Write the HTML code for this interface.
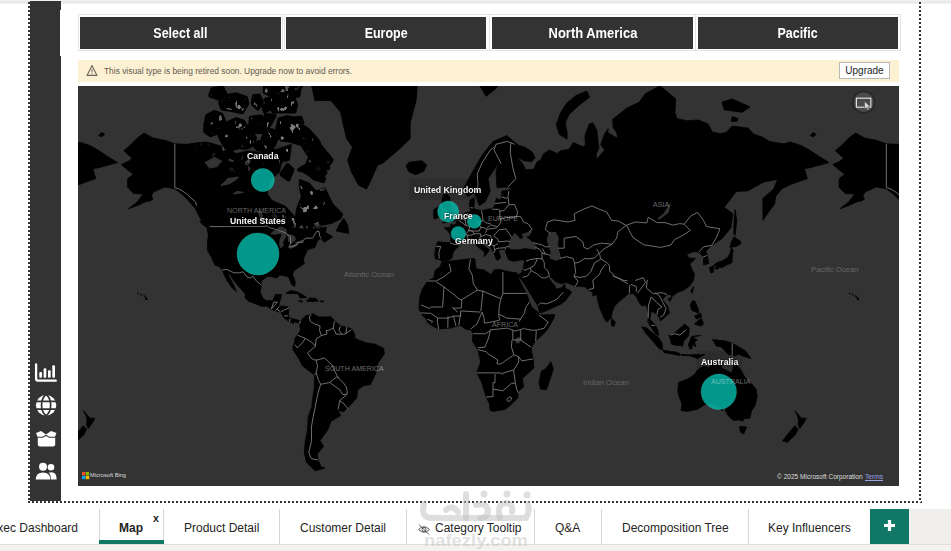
<!DOCTYPE html>
<html><head><meta charset="utf-8">
<style>
*{margin:0;padding:0;box-sizing:border-box}
html,body{width:951px;height:551px;overflow:hidden;background:#fff;font-family:"Liberation Sans",sans-serif;position:relative}
.abs{position:absolute}
#topband{left:0;top:0;width:951px;height:4px;background:linear-gradient(#f4f4f4,#e8e8e8 40%,#f2f2f2)}
#side{left:30px;top:1px;width:31px;height:500px;background:#333}
#dotl{left:28px;top:2px;width:2px;height:500px;background:repeating-linear-gradient(#333 0 2px,#fff 2px 4px)}
#dotb{left:28px;top:501px;width:894px;height:2px;background:repeating-linear-gradient(90deg,#333 0 2px,#fff 2px 4px)}
#dotr{left:919px;top:2px;width:2px;height:500px;background:repeating-linear-gradient(#333 0 2px,#fff 2px 4px)}
.btnwrap{top:14px;height:37px;border:1px solid #e3e3e3;background:#fff}
.btn{top:17px;height:32px;background:#333;color:#fff;font-weight:bold;font-size:14px;text-align:center;line-height:33px}
.btn span{display:inline-block;transform:scaleX(0.89)}
#warn{left:78px;top:60px;width:821px;height:22px;background:#fdf1d4}
#warn .t{left:26px;top:6px;font-size:8.4px;color:#5f5a50;white-space:nowrap}
#upg{left:839px;top:62px;width:51px;height:17px;background:#fff;border:1px solid #b8b8b8;font-size:10px;color:#222;text-align:center;line-height:15px}
#map{left:78px;top:86px;width:821px;height:400px;overflow:hidden;background:#333}
.lbl{position:absolute;color:#f4f4f4;font-size:9.7px;transform:scaleX(0.9);transform-origin:0 0;font-weight:bold;white-space:nowrap;text-shadow:0 0 2px rgba(0,0,0,.8);background:rgba(0,0,0,.13);box-shadow:0 0 0 5px rgba(0,0,0,.13)}
.glbl{position:absolute;color:#666;font-size:7.7px;white-space:nowrap}
#tabs{left:0;top:509px;width:951px;height:35px;background:#fff}
#tabband{left:0;top:544px;width:951px;height:7px;background:#f3f2f1;border-top:1px solid #e1dfdd}
.tab{position:absolute;top:510px;height:35px;font-size:12px;color:#252423;line-height:37px;white-space:nowrap}
.sep{position:absolute;top:509px;width:1px;height:35px;background:#d6d6d6}
</style></head><body>
<div class="abs" id="topband"></div>
<div class="abs" id="side"></div><div class="abs" style="left:60px;top:10px;width:1px;height:46px;background:#fff"></div>
<div class="abs" id="dotl"></div>
<div class="abs" id="dotb"></div>
<div class="abs" id="dotr"></div>
<svg class="abs" style="left:30px;top:355px" width="31" height="130" viewBox="30 355 31 130">
 <g fill="#fff">
  <path d="M36.1,364.5V378.5Q36.1,380.7 38.3,380.7H55.8" fill="none" stroke="#fff" stroke-width="2.3" stroke-linecap="round"/>
  <rect x="39.3" y="372" width="2.7" height="5.8" rx="1"/>
  <rect x="43.6" y="368.2" width="2.7" height="9.6" rx="1"/>
  <rect x="48" y="370.3" width="2.7" height="7.5" rx="1"/>
  <rect x="52.3" y="365.3" width="2.7" height="12.5" rx="1"/>
 </g>
 <g>
  <circle cx="46.1" cy="405.2" r="10.2" fill="#fff"/>
  <path d="M35,401.3H57.2M35,409.1H57.2" stroke="#333" stroke-width="1.7"/>
  <path d="M46.1,394.5 C40,399 40,411 46.1,415.9 M46.1,394.5 C52.2,399 52.2,411 46.1,415.9" stroke="#333" stroke-width="1.7" fill="none"/>
 </g>
 <g fill="#fff">
  <path d="M36,433 L41,431 L46,434.5 L51,431 L56.5,433 L55,436.8 L49.5,436.8 L46,434.8 L42.5,436.8 L37.5,436.8Z"/>
  <path d="M37.8,437.8 L42.8,437.8 L46,436 L49.2,437.8 L55.2,437.8 L55.2,444.5 Q55.2,446.6 53,446.6 L40,446.6 Q37.8,446.6 37.8,444.5Z"/>
 </g>
 <g fill="#fff">
  <circle cx="43" cy="466.8" r="4"/>
  <circle cx="51" cy="467.3" r="3.3"/>
  <path d="M35.8,479.6 Q35.8,472.4 43,472.4 Q50.2,472.4 50.2,479.6Z"/>
  <path d="M50.8,479.6 Q51,474.5 48.6,472.8 Q50,472.3 51.5,472.3 Q56.7,472.3 56.7,479.6Z"/>
 </g>
</svg>

<div class="abs btnwrap" style="left:78px;width:205px"></div>
<div class="abs btnwrap" style="left:284px;width:206px"></div>
<div class="abs btnwrap" style="left:489px;width:207px"></div>
<div class="abs btnwrap" style="left:695px;width:206px"></div>
<div class="abs btn" style="left:80px;width:201px"><span>Select all</span></div>
<div class="abs btn" style="left:286px;width:200px"><span>Europe</span></div>
<div class="abs btn" style="left:492px;width:201px"><span style="transform:scaleX(0.925)">North America</span></div>
<div class="abs btn" style="left:698px;width:200px"><span>Pacific</span></div>

<div class="abs" id="warn"><div class="abs t">This visual type is being retired soon. Upgrade now to avoid errors.</div>
<svg class="abs" style="left:8px;top:4px" width="12" height="13" viewBox="0 0 12 13"><path d="M6,1.6 L11,11.4 L1,11.4Z" fill="none" stroke="#6a655c" stroke-width="1.1" stroke-linejoin="round"/><path d="M6,5V8.4M6,9.4V10.3" stroke="#6a655c" stroke-width="1"/></svg>
</div>
<div class="abs" id="upg">Upgrade</div>

<div class="abs" id="map"><svg width="821" height="400" viewBox="0 0 821 400" style="display:block"><rect width="821" height="400" fill="#333"/><path d="M74.1,110.9L74.7,113.5L70.1,115.7L69.6,112.4L74.1,110.9ZM785.6,110.9L786.2,113.5L781.6,115.7L781.1,112.4L785.6,110.9ZM121.9,135.1L127.5,136.3L131.6,142.4L128.8,141.8L123.5,137.6L121.9,135.1ZM43.3,78.6L50.4,75.2L54.1,72.2L45.8,64.7L53.3,58.3L59.3,52.0L66.2,47.1L75.1,52.0L86.9,54.3L96.8,57.8L108.7,58.3L120.5,56.6L129.4,56.1L148.2,61.7L158.1,67.6L170.0,64.9L181.8,66.5L187.7,55.5L197.6,63.9L213.4,58.3L211.5,74.2L203.6,76.6L201.6,86.0L191.7,94.7L189.3,107.5L193.7,114.2L207.5,120.3L217.4,131.3L218.4,123.0L223.3,110.5L221.3,100.9L221.3,93.4L231.2,96.8L238.1,104.8L247.0,101.7L254.9,117.8L264.8,128.0L262.8,132.9L254.0,137.2L243.1,139.7L239.1,142.1L248.6,141.2L247.4,146.5L254.9,150.8L246.0,156.3L243.1,152.2L239.1,155.0L237.2,161.2L229.2,164.1L227.5,168.4L225.3,173.2L226.3,177.6L215.4,185.2L214.6,188.7L217.4,196.5L216.4,200.5L213.8,198.8L210.5,190.9L206.5,189.8L201.6,189.1L199.2,192.1L193.7,190.7L189.7,190.5L183.2,194.8L183.4,199.0L182.2,206.3L185.2,212.7L188.7,214.8L194.7,214.6L197.6,208.5L203.6,208.5L202.0,214.8L200.6,220.0L208.5,220.4L211.1,222.0L210.3,228.1L211.5,232.1L218.4,233.5L222.3,235.1L220.7,237.1L216.4,235.7L215.4,237.5L210.5,235.1L206.1,232.1L204.5,229.1L202.4,226.1L197.6,225.1L192.7,222.8L188.7,220.0L183.8,220.4L177.9,217.9L170.9,215.4L167.0,211.6L167.6,208.5L165.0,205.3L159.5,199.2L155.7,194.3L152.6,189.8L148.6,186.1L153.2,194.3L157.1,202.0L158.3,205.5L153.7,201.4L149.2,194.8L146.2,188.7L144.1,184.0L141.3,180.5L137.1,179.3L133.4,171.2L129.6,164.6L129.4,157.7L130.4,148.5L129.0,142.4L132.4,140.6L123.5,135.1L117.6,123.0L111.7,116.0L104.7,108.7L96.8,102.9L86.9,100.9L75.5,106.0L71.1,114.2L59.3,119.6L50.4,122.7L59.3,116.0L65.2,107.9L55.7,107.5L49.4,100.9L49.8,92.6L55.3,88.2L49.4,83.7L43.3,78.6ZM754.8,78.6L761.9,75.2L765.6,72.2L757.3,64.7L764.8,58.3L770.8,52.0L777.7,47.1L786.6,52.0L798.4,54.3L808.3,57.8L820.2,58.3L832.0,56.6L840.9,56.1L859.7,61.7L869.6,67.6L881.5,64.9L893.3,66.5L899.2,55.5L909.1,63.9L924.9,58.3L923.0,74.2L915.1,76.6L913.1,86.0L903.2,94.7L900.8,107.5L905.2,114.2L919.0,120.3L928.9,131.3L929.9,123.0L934.8,110.5L932.8,100.9L932.8,93.4L942.7,96.8L949.6,104.8L958.5,101.7L966.4,117.8L976.3,128.0L974.3,132.9L965.5,137.2L954.6,139.7L950.6,142.1L960.1,141.2L958.9,146.5L966.4,150.8L957.5,156.3L954.6,152.2L950.6,155.0L948.7,161.2L940.7,164.1L939.0,168.4L936.8,173.2L937.8,177.6L926.9,185.2L926.1,188.7L928.9,196.5L927.9,200.5L925.3,198.8L922.0,190.9L918.0,189.8L913.1,189.1L910.7,192.1L905.2,190.7L901.2,190.5L894.7,194.8L894.9,199.0L893.7,206.3L896.7,212.7L900.2,214.8L906.2,214.6L909.1,208.5L915.1,208.5L913.5,214.8L912.1,220.0L920.0,220.4L922.6,222.0L921.8,228.1L923.0,232.1L929.9,233.5L933.8,235.1L932.2,237.1L927.9,235.7L926.9,237.5L922.0,235.1L917.6,232.1L916.0,229.1L913.9,226.1L909.1,225.1L904.2,222.8L900.2,220.0L895.3,220.4L889.4,217.9L882.4,215.4L878.5,211.6L879.1,208.5L876.5,205.3L871.0,199.2L867.2,194.3L864.1,189.8L860.1,186.1L864.7,194.3L868.6,202.0L869.8,205.5L865.2,201.4L860.7,194.8L857.7,188.7L855.6,184.0L852.8,180.5L848.6,179.3L844.9,171.2L841.1,164.6L840.9,157.7L841.9,148.5L840.5,142.4L843.9,140.6L835.0,135.1L829.1,123.0L823.2,116.0L816.2,108.7L808.3,102.9L798.4,100.9L787.0,106.0L782.6,114.2L770.8,119.6L761.9,122.7L770.8,116.0L776.7,107.9L767.2,107.5L760.9,100.9L761.3,92.6L766.8,88.2L760.9,83.7L754.8,78.6ZM237.2,14.5L233.2,-3.1L243.1,-23.9L256.9,-49.2L296.4,-72.8L336.0,-49.2L339.9,-13.0L337.9,14.5L332.0,36.8L332.0,52.6L320.2,63.9L305.3,76.6L299.4,79.1L292.5,94.7L288.5,102.9L280.6,98.9L273.7,86.0L269.8,74.2L274.7,61.1L268.8,52.6L265.8,40.1L262.8,26.2L253.0,14.5L237.2,14.5ZM343.9,74.7L331.0,76.2L328.1,80.0L331.0,86.0L337.9,88.7L345.9,85.1L348.6,79.1L343.9,74.7ZM265.8,132.5L269.8,139.1L270.8,147.4L258.3,145.0L260.9,139.1L265.8,132.5ZM212.4,204.8L217.4,205.3L224.3,208.5L228.9,211.6L222.1,211.9L220.4,207.8L215.4,207.4L207.7,207.6L212.4,204.8ZM231.6,212.1L237.4,212.3L240.5,215.0L235.2,215.6L228.5,215.2L231.6,212.1ZM220.7,214.8L224.7,215.0L223.7,216.0L220.7,215.4L220.7,214.8ZM242.7,214.8L245.8,215.0L245.3,215.8L242.7,215.8L242.7,214.8ZM222.5,234.9L227.3,230.1L232.8,228.5L234.0,230.9L234.0,227.3L241.1,231.1L253.0,230.7L256.9,235.1L262.8,240.1L268.8,241.1L273.7,243.1L276.7,248.0L276.7,252.0L280.6,254.0L288.5,256.9L296.4,257.9L305.7,262.3L306.3,267.9L299.4,277.9L297.4,288.2L292.5,298.5L285.6,299.8L279.6,304.1L278.7,311.9L272.7,318.8L265.8,325.4L259.9,324.7L262.8,329.6L253.0,335.3L251.0,341.0L249.0,345.0L242.1,354.6L245.5,360.4L239.1,368.0L240.1,374.0L243.1,381.0L247.0,382.0L237.2,384.8L228.3,376.0L226.3,366.4L227.3,354.6L229.2,346.3L229.6,342.3L230.2,330.8L233.8,321.2L234.4,314.2L236.2,303.1L236.6,289.2L224.7,279.9L220.4,271.9L215.0,263.9L214.8,260.9L216.4,256.9L217.0,252.0L219.6,249.0L222.5,244.1L221.7,238.1L222.5,234.9ZM363.8,176.1L395.3,172.4L397.2,173.2L397.2,178.1L398.2,182.8L406.1,184.0L413.1,188.7L416.0,184.0L421.0,183.3L433.8,186.3L439.3,187.0L439.7,189.8L442.5,196.5L448.4,207.4L451.6,215.8L453.6,221.0L460.9,227.1L460.9,229.1L476.7,228.5L475.9,232.1L470.4,242.1L465.4,248.0L457.5,255.0L453.6,260.9L453.6,265.9L455.3,272.9L455.9,282.0L444.3,292.4L445.7,300.9L440.3,305.2L439.7,311.9L432.8,318.8L426.9,323.5L415.0,325.4L412.1,324.2L411.5,317.7L408.1,311.0L403.8,296.6L398.8,286.7L402.6,275.9L401.2,268.9L399.8,263.9L394.3,255.0L394.9,248.0L393.3,244.1L388.3,243.5L382.2,239.3L372.5,242.1L360.7,242.9L354.7,240.1L349.4,236.5L348.4,233.1L344.3,229.5L340.9,222.6L341.9,210.6L344.3,203.1L349.8,194.8L355.7,192.1L357.1,184.5L362.1,180.7L363.8,176.1ZM472.9,275.9L475.3,283.0L472.3,292.4L468.4,303.7L462.5,303.1L461.1,296.6L463.4,285.1L467.4,283.0L472.9,275.9ZM-347.1,175.6L-340.0,173.9L-337.4,171.7L-336.6,166.9L-334.0,163.0L-329.7,159.6L-329.1,157.1L-324.1,156.9L-319.2,154.4L-316.2,155.0L-311.3,161.2L-305.2,165.6L-305.2,170.7L-303.2,168.4L-300.8,165.1L-302.4,164.3L-299.4,164.1L-304.4,160.6L-309.3,156.3L-311.7,151.1L-308.9,150.2L-306.7,153.6L-300.0,158.8L-297.7,163.0L-295.1,168.2L-293.3,173.2L-291.5,174.4L-288.6,171.2L-290.5,166.9L-290.9,164.3L-287.6,163.3L-283.6,163.5L-284.0,165.6L-282.2,170.7L-280.7,173.9L-275.7,175.2L-266.8,173.7L-265.0,175.6L-266.4,182.8L-267.8,186.3L-271.6,189.6L-267.6,194.3L-261.9,203.1L-256.9,211.6L-251.4,220.0L-250.0,226.7L-246.1,226.1L-237.2,222.0L-228.3,217.9L-224.1,214.8L-217.8,206.3L-220.4,204.0L-224.3,202.2L-224.7,198.1L-228.3,202.0L-233.2,203.1L-234.8,199.6L-237.2,197.0L-241.1,191.4L-240.1,189.8L-234.2,195.4L-228.3,197.7L-223.3,196.5L-214.5,199.9L-204.0,200.9L-201.2,204.2L-196.7,206.3L-196.7,210.0L-192.5,208.5L-192.1,213.7L-189.7,222.0L-185.4,232.1L-182.8,235.9L-178.3,232.1L-177.3,226.1L-174.9,220.0L-171.4,216.4L-164.3,210.6L-161.1,207.8L-156.1,207.4L-153.4,210.6L-149.4,217.9L-147.3,220.0L-143.3,218.9L-140.9,228.1L-141.7,236.1L-137.8,242.1L-134.8,247.1L-130.9,249.4L-131.6,244.1L-134.4,239.1L-139.7,233.1L-138.4,225.3L-134.4,227.1L-130.5,231.1L-128.9,234.9L-124.5,231.1L-120.0,227.1L-122.0,220.0L-127.1,213.7L-122.5,208.5L-118.6,208.5L-118.2,211.0L-111.7,206.3L-105.8,204.2L-99.8,199.9L-95.9,194.3L-95.1,187.7L-97.3,184.0L-99.8,178.1L-93.9,172.4L-100.8,171.9L-102.8,168.2L-95.9,165.6L-90.5,166.1L-86.0,171.4L-86.0,179.0L-80.7,177.6L-82.2,169.4L-83.6,165.6L-77.9,159.0L-75.1,157.7L-67.2,152.2L-58.7,142.1L-56.7,128.0L-58.3,126.4L-65.2,121.3L-53.4,105.6L-41.5,104.8L-25.7,96.0L-11.9,93.4L-15.8,102.9L-26.7,112.4L-26.5,134.4L-22.3,128.0L-14.8,117.8L-13.8,110.5L-7.9,102.9L-0.0,98.9L17.8,92.6L14.8,82.8L21.7,81.4L39.5,76.6L31.6,71.7L19.8,63.9L11.8,59.5L1.0,56.1L-5.9,57.8L-19.8,55.5L-27.7,50.8L-35.6,48.3L-41.5,42.0L-57.3,40.1L-63.3,46.5L-69.2,47.7L-77.1,45.9L-81.4,38.1L-90.9,34.0L-102.8,34.7L-112.7,32.6L-114.6,26.2L-113.7,12.9L-129.5,-0.3L-144.3,7.8L-150.2,16.1L-163.1,22.4L-176.9,33.3L-176.3,42.0L-172.9,46.5L-171.6,52.6L-181.8,46.5L-181.2,42.7L-184.8,47.7L-188.8,58.3L-184.8,63.9L-193.1,73.7L-193.1,67.6L-190.7,62.2L-191.7,53.7L-192.5,44.6L-196.7,36.8L-200.2,38.1L-204.6,49.6L-204.0,58.3L-205.6,61.1L-216.4,56.6L-220.4,63.3L-229.3,64.9L-232.2,67.6L-240.1,63.9L-246.1,68.1L-249.0,74.2L-252.4,75.7L-255.8,83.3L-263.9,83.7L-266.8,77.6L-270.8,73.2L-272.0,71.2L-265.8,74.7L-257.9,75.7L-254.4,71.7L-257.3,66.0L-264.9,61.1L-270.8,59.5L-282.6,49.6L-296.5,55.5L-307.3,69.1L-318.2,88.2L-326.1,102.9L-322.2,110.5L-315.2,106.8L-312.7,112.4L-310.3,119.6L-304.4,116.0L-299.4,105.6L-301.4,92.6L-291.5,78.1L-293.5,86.0L-292.5,101.7L-281.6,100.9L-276.7,103.3L-287.6,105.2L-288.6,114.2L-293.3,112.4L-294.5,118.9L-297.3,123.3L-299.4,122.7L-307.9,124.7L-314.3,123.3L-315.8,122.0L-315.1,116.0L-315.2,111.7L-319.6,114.2L-320.0,119.6L-318.6,125.4L-324.1,126.7L-327.7,131.3L-331.1,133.8L-332.8,134.8L-333.2,137.6L-335.8,139.1L-338.8,138.5L-339.0,141.5L-345.3,141.8L-340.9,145.6L-338.4,150.8L-339.0,156.3L-343.5,156.6L-351.8,155.8L-353.6,160.4L-354.8,168.9L-353.8,173.2L-350.8,173.2L-347.1,175.6ZM364.4,175.6L371.5,173.9L374.1,171.7L374.9,166.9L377.5,163.0L381.8,159.6L382.4,157.1L387.4,156.9L392.3,154.4L395.3,155.0L400.2,161.2L406.3,165.6L406.3,170.7L408.3,168.4L410.7,165.1L409.1,164.3L412.1,164.1L407.1,160.6L402.2,156.3L399.8,151.1L402.6,150.2L404.8,153.6L411.5,158.8L413.8,163.0L416.4,168.2L418.2,173.2L420.0,174.4L422.9,171.2L421.0,166.9L420.6,164.3L423.9,163.3L427.9,163.5L427.5,165.6L429.3,170.7L430.8,173.9L435.8,175.2L444.7,173.7L446.5,175.6L445.1,182.8L443.7,186.3L439.9,189.6L443.9,194.3L449.6,203.1L454.6,211.6L460.1,220.0L461.5,226.7L465.4,226.1L474.3,222.0L483.2,217.9L487.4,214.8L493.7,206.3L491.1,204.0L487.2,202.2L486.8,198.1L483.2,202.0L478.3,203.1L476.7,199.6L474.3,197.0L470.4,191.4L471.4,189.8L477.3,195.4L483.2,197.7L488.2,196.5L497.0,199.9L507.5,200.9L510.3,204.2L514.8,206.3L514.8,210.0L519.0,208.5L519.4,213.7L521.8,222.0L526.1,232.1L528.7,235.9L533.2,232.1L534.2,226.1L536.6,220.0L540.1,216.4L547.2,210.6L550.4,207.8L555.4,207.4L558.1,210.6L562.1,217.9L564.2,220.0L568.2,218.9L570.6,228.1L569.8,236.1L573.7,242.1L576.7,247.1L580.6,249.4L579.9,244.1L577.1,239.1L571.8,233.1L573.1,225.3L577.1,227.1L581.0,231.1L582.6,234.9L587.0,231.1L591.5,227.1L589.5,220.0L584.4,213.7L589.0,208.5L592.9,208.5L593.3,211.0L599.8,206.3L605.7,204.2L611.7,199.9L615.6,194.3L616.4,187.7L614.2,184.0L611.7,178.1L617.6,172.4L610.7,171.9L608.7,168.2L615.6,165.6L621.0,166.1L625.5,171.4L625.5,179.0L630.8,177.6L629.3,169.4L627.9,165.6L633.6,159.0L636.4,157.7L644.3,152.2L652.8,142.1L654.8,128.0L653.2,126.4L646.3,121.3L658.1,105.6L670.0,104.8L685.8,96.0L699.6,93.4L695.7,102.9L684.8,112.4L685.0,134.4L689.2,128.0L696.7,117.8L697.7,110.5L703.6,102.9L711.5,98.9L729.3,92.6L726.3,82.8L733.2,81.4L751.0,76.6L743.1,71.7L731.2,63.9L723.3,59.5L712.5,56.1L705.6,57.8L691.7,55.5L683.8,50.8L675.9,48.3L670.0,42.0L654.2,40.1L648.2,46.5L642.3,47.7L634.4,45.9L630.1,38.1L620.6,34.0L608.7,34.7L598.8,32.6L596.9,26.2L597.8,12.9L582.0,-0.3L567.2,7.8L561.3,16.1L548.4,22.4L534.6,33.3L535.2,42.0L538.6,46.5L539.9,52.6L529.7,46.5L530.3,42.7L526.7,47.7L522.7,58.3L526.7,63.9L518.4,73.7L518.4,67.6L520.8,62.2L519.8,53.7L519.0,44.6L514.8,36.8L511.3,38.1L506.9,49.6L507.5,58.3L505.9,61.1L495.1,56.6L491.1,63.3L482.2,64.9L479.3,67.6L471.4,63.9L465.4,68.1L462.5,74.2L459.1,75.7L455.7,83.3L447.6,83.7L444.7,77.6L440.7,73.2L439.5,71.2L445.7,74.7L453.6,75.7L457.1,71.7L454.2,66.0L446.6,61.1L440.7,59.5L428.9,49.6L415.0,55.5L404.2,69.1L393.3,88.2L385.4,102.9L389.3,110.5L396.3,106.8L398.8,112.4L401.2,119.6L407.1,116.0L412.1,105.6L410.1,92.6L420.0,78.1L418.0,86.0L419.0,101.7L429.9,100.9L434.8,103.3L423.9,105.2L422.9,114.2L418.2,112.4L417.0,118.9L414.2,123.3L412.1,122.7L403.6,124.7L397.2,123.3L395.7,122.0L396.4,116.0L396.3,111.7L391.9,114.2L391.5,119.6L392.9,125.4L387.4,126.7L383.8,131.3L380.4,133.8L378.7,134.8L378.3,137.6L375.7,139.1L372.7,138.5L372.5,141.5L366.2,141.8L370.6,145.6L373.1,150.8L372.5,156.3L368.0,156.6L359.7,155.8L357.9,160.4L356.7,168.9L357.7,173.2L360.7,173.2L364.4,175.6ZM369.6,108.3L371.9,111.7L372.5,121.3L375.9,126.4L378.9,128.4L378.3,132.9L378.1,134.1L376.1,135.1L371.5,135.7L364.6,137.2L367.2,133.8L365.4,132.5L366.4,128.4L369.6,126.7L368.4,123.0L365.6,121.3L364.2,118.5L364.0,114.2L365.4,108.7L369.6,108.3ZM361.1,120.3L363.4,124.4L363.0,130.6L356.1,132.9L355.7,128.0L355.7,123.7L361.1,120.3ZM653.2,161.7L655.2,164.3L654.2,170.7L654.0,176.6L648.6,179.0L643.9,181.7L638.4,179.8L634.4,180.5L638.4,176.9L645.3,174.4L649.8,171.2L652.2,166.9L653.2,161.7ZM655.9,150.8L662.1,155.0L663.1,157.7L658.1,160.4L652.2,161.4L653.0,157.1L655.9,150.8ZM634.2,180.5L631.4,181.7L632.8,187.0L635.2,186.3L636.0,182.4L634.2,180.5ZM641.3,179.8L640.7,182.4L638.4,183.3L636.8,181.7L641.3,179.8ZM657.1,123.7L658.7,134.4L657.1,149.4L655.8,147.9L656.1,134.4L657.1,123.7ZM615.6,200.3L614.2,207.4L612.9,205.3L615.6,200.3ZM593.9,211.6L591.9,215.4L590.1,212.7L593.9,211.6ZM614.4,214.8L617.0,215.2L620.6,224.1L620.6,226.9L613.9,224.5L612.3,218.9L614.4,214.8ZM623.5,232.5L625.5,238.1L622.5,240.1L616.6,238.1L619.6,235.1L623.5,232.5ZM622.5,227.1L623.5,231.1L618.6,233.1L616.6,230.1L622.5,227.1ZM606.7,238.1L611.3,242.1L610.5,250.0L605.7,255.0L604.8,259.9L595.9,258.9L593.3,257.9L592.9,255.0L590.9,249.0L595.3,248.0L601.2,242.9L606.7,238.1ZM563.8,240.9L568.4,241.7L573.5,246.3L580.1,251.0L584.0,256.9L584.6,263.7L581.6,262.9L577.1,257.9L572.2,252.0L567.6,247.1L563.8,240.9ZM585.0,263.9L593.9,265.7L597.8,265.9L601.6,267.5L601.8,269.5L593.9,267.9L586.0,266.7L585.0,263.9ZM602.8,268.3L610.7,268.9L618.6,268.5L622.5,268.9L627.1,268.3L622.5,270.9L619.6,272.5L611.7,269.7L603.2,269.5L602.8,268.3ZM622.5,249.4L613.7,250.4L612.3,253.6L610.5,258.9L611.7,263.1L613.7,262.9L614.6,257.9L617.6,260.9L616.6,256.0L619.2,254.0L614.6,251.0L622.5,249.4ZM634.4,253.6L647.3,255.0L654.2,257.1L664.1,262.9L667.6,264.9L672.9,272.5L666.0,270.5L660.1,267.9L657.3,269.9L650.2,268.3L643.3,260.9L638.0,259.9L636.8,256.9L634.4,253.6ZM657.1,273.3L659.3,279.9L662.9,284.0L667.0,291.3L673.5,297.7L678.1,303.1L679.1,310.8L676.9,320.0L673.5,324.7L672.0,332.1L666.0,332.8L664.6,335.3L661.1,334.1L655.2,334.3L652.4,332.1L648.6,327.6L649.2,325.9L647.3,325.4L647.8,321.2L643.9,324.7L639.3,318.8L634.4,317.7L626.5,318.8L619.6,323.3L608.7,325.4L603.0,324.5L604.0,317.7L601.2,310.8L599.8,305.2L600.6,296.6L601.2,296.2L609.7,293.0L617.0,288.2L618.6,285.1L623.5,281.0L628.3,280.4L631.4,282.0L633.4,276.9L638.4,275.9L645.3,273.9L644.1,277.9L643.3,282.0L653.8,287.1L655.2,282.0L655.4,276.9L657.1,273.3ZM661.5,340.5L668.6,341.0L665.6,347.9L662.5,346.3L661.5,340.5ZM5.3,324.5L11.8,332.1L16.8,332.3L14.2,337.1L10.3,342.6L8.5,338.4L9.1,334.6L7.9,329.6L5.3,324.5ZM716.8,324.5L723.3,332.1L728.3,332.3L725.7,337.1L721.8,342.6L720.0,338.4L720.6,334.6L719.4,329.6L716.8,324.5ZM5.3,339.7L8.5,343.1L6.1,348.5L-2.0,356.3L-6.9,354.9L-2.0,348.5L5.3,339.7ZM716.8,339.7L720.0,343.1L717.6,348.5L709.5,356.3L704.6,354.9L709.5,348.5L716.8,339.7ZM534.0,232.5L537.2,236.1L536.2,240.1L533.6,239.7L533.2,236.1L534.0,232.5ZM489.1,53.1L481.2,48.3L478.3,38.8L482.2,27.6L488.2,17.7L498.0,9.5L508.9,5.1L511.5,11.2L501.0,19.3L491.1,28.4L487.2,36.8L489.1,46.5L489.1,53.1ZM408.1,10.3L401.2,-1.2L397.2,-13.0L409.1,-23.9L428.9,-18.3L422.9,-3.1L417.0,3.4L408.1,10.3ZM646.3,23.9L643.9,16.1L654.2,12.9L672.0,20.9L664.1,26.2L646.3,23.9ZM20.7,49.6L23.7,46.5L26.7,48.3L23.7,50.8L20.7,49.6ZM732.2,49.6L735.2,46.5L738.2,48.3L735.2,50.8L732.2,49.6ZM653.2,35.4L654.2,30.5L660.1,32.6L659.1,35.4L653.2,35.4ZM67.4,211.9L67.6,211.2L69.6,212.7L67.8,213.9L67.4,211.9ZM778.9,211.9L779.1,211.2L781.1,212.7L779.3,213.9L778.9,211.9ZM65.8,209.5L67.4,210.4L66.0,210.6L65.8,209.5ZM777.3,209.5L778.9,210.4L777.5,210.6L777.3,209.5ZM62.8,208.0L64.0,208.9L62.8,209.1L62.8,208.0ZM774.3,208.0L775.5,208.9L774.3,209.1L774.3,208.0ZM60.1,206.8L60.7,207.6L59.7,207.6L60.1,206.8ZM771.6,206.8L772.2,207.6L771.2,207.6L771.6,206.8Z" fill="#000" stroke="#000" stroke-width="0.8"/><path d="M141.3,12.9L132.4,9.5L134.4,3.4L144.3,1.6L147.2,7.8L141.3,12.9ZM186.8,25.4L185.4,20.1L189.7,18.5L191.7,22.4L186.8,25.4ZM195.6,59.5L198.6,52.6L194.7,44.6L188.7,43.3L184.8,52.6L186.8,58.3L195.6,59.5ZM216.4,38.1L215.4,32.6L222.3,31.9L224.3,36.8L216.4,38.1ZM193.7,-1.2L201.6,-8.0L193.7,-23.9L183.8,-18.3L185.8,-3.1L193.7,-1.2ZM201.6,33.3L209.5,31.2L221.3,34.0L221.7,38.8L229.2,43.3L235.2,49.6L240.1,55.5L242.1,60.0L246.0,64.9L251.0,70.7L253.4,74.2L250.0,79.1L250.0,82.3L245.1,79.1L246.6,85.1L247.4,86.9L244.1,89.1L246.0,92.6L245.1,95.1L236.2,92.2L233.2,89.6L226.3,85.1L221.3,83.7L229.2,79.1L232.2,70.7L228.3,64.9L224.3,58.3L211.5,54.3L203.6,53.7L198.6,45.9L201.6,33.3ZM142.9,52.6L140.9,47.7L143.3,41.4L149.2,37.4L158.1,33.3L165.0,35.4L168.0,40.1L173.9,46.5L176.9,52.0L174.9,58.3L168.0,61.7L161.1,61.1L153.2,63.3L146.2,58.3L142.9,52.6ZM132.4,49.0L127.3,45.2L127.5,38.1L129.4,29.8L136.4,26.2L143.1,28.4L146.2,35.4L140.7,40.1L139.3,46.5L132.4,49.0ZM198.0,12.0L209.5,11.2L220.4,9.5L221.7,1.6L229.2,-8.0L237.2,-23.9L187.7,-23.9L186.8,6.0L198.0,12.0ZM195.6,25.4L209.5,25.4L216.4,25.4L218.0,18.5L215.4,12.0L199.6,10.3L187.7,13.7L190.7,19.3L195.6,25.4ZM189.7,41.4L186.8,36.8L187.7,29.1L196.6,29.8L192.7,36.8L189.7,41.4ZM183.8,45.9L185.8,40.1L182.8,30.5L172.9,31.9L172.3,40.1L177.9,45.9L183.8,45.9ZM164.0,26.2L154.1,23.9L144.3,22.4L142.3,16.9L146.2,10.3L158.1,8.6L168.0,12.0L169.0,17.7L164.0,26.2ZM179.8,22.4L174.9,17.7L175.9,10.3L180.8,9.5L183.8,16.1L179.8,22.4ZM209.5,79.1L214.4,83.7L210.5,93.4L203.6,88.2L209.5,79.1ZM179.8,63.3L176.9,59.5L180.8,56.1L185.8,56.6L186.8,61.7L179.8,63.3Z" fill="#000" stroke="#000" stroke-width="4.2" stroke-linejoin="round"/><defs><clipPath id="landclip"><path d="M74.1,110.9L74.7,113.5L70.1,115.7L69.6,112.4L74.1,110.9ZM785.6,110.9L786.2,113.5L781.6,115.7L781.1,112.4L785.6,110.9ZM121.9,135.1L127.5,136.3L131.6,142.4L128.8,141.8L123.5,137.6L121.9,135.1ZM43.3,78.6L50.4,75.2L54.1,72.2L45.8,64.7L53.3,58.3L59.3,52.0L66.2,47.1L75.1,52.0L86.9,54.3L96.8,57.8L108.7,58.3L120.5,56.6L129.4,56.1L148.2,61.7L158.1,67.6L170.0,64.9L181.8,66.5L187.7,55.5L197.6,63.9L213.4,58.3L211.5,74.2L203.6,76.6L201.6,86.0L191.7,94.7L189.3,107.5L193.7,114.2L207.5,120.3L217.4,131.3L218.4,123.0L223.3,110.5L221.3,100.9L221.3,93.4L231.2,96.8L238.1,104.8L247.0,101.7L254.9,117.8L264.8,128.0L262.8,132.9L254.0,137.2L243.1,139.7L239.1,142.1L248.6,141.2L247.4,146.5L254.9,150.8L246.0,156.3L243.1,152.2L239.1,155.0L237.2,161.2L229.2,164.1L227.5,168.4L225.3,173.2L226.3,177.6L215.4,185.2L214.6,188.7L217.4,196.5L216.4,200.5L213.8,198.8L210.5,190.9L206.5,189.8L201.6,189.1L199.2,192.1L193.7,190.7L189.7,190.5L183.2,194.8L183.4,199.0L182.2,206.3L185.2,212.7L188.7,214.8L194.7,214.6L197.6,208.5L203.6,208.5L202.0,214.8L200.6,220.0L208.5,220.4L211.1,222.0L210.3,228.1L211.5,232.1L218.4,233.5L222.3,235.1L220.7,237.1L216.4,235.7L215.4,237.5L210.5,235.1L206.1,232.1L204.5,229.1L202.4,226.1L197.6,225.1L192.7,222.8L188.7,220.0L183.8,220.4L177.9,217.9L170.9,215.4L167.0,211.6L167.6,208.5L165.0,205.3L159.5,199.2L155.7,194.3L152.6,189.8L148.6,186.1L153.2,194.3L157.1,202.0L158.3,205.5L153.7,201.4L149.2,194.8L146.2,188.7L144.1,184.0L141.3,180.5L137.1,179.3L133.4,171.2L129.6,164.6L129.4,157.7L130.4,148.5L129.0,142.4L132.4,140.6L123.5,135.1L117.6,123.0L111.7,116.0L104.7,108.7L96.8,102.9L86.9,100.9L75.5,106.0L71.1,114.2L59.3,119.6L50.4,122.7L59.3,116.0L65.2,107.9L55.7,107.5L49.4,100.9L49.8,92.6L55.3,88.2L49.4,83.7L43.3,78.6ZM754.8,78.6L761.9,75.2L765.6,72.2L757.3,64.7L764.8,58.3L770.8,52.0L777.7,47.1L786.6,52.0L798.4,54.3L808.3,57.8L820.2,58.3L832.0,56.6L840.9,56.1L859.7,61.7L869.6,67.6L881.5,64.9L893.3,66.5L899.2,55.5L909.1,63.9L924.9,58.3L923.0,74.2L915.1,76.6L913.1,86.0L903.2,94.7L900.8,107.5L905.2,114.2L919.0,120.3L928.9,131.3L929.9,123.0L934.8,110.5L932.8,100.9L932.8,93.4L942.7,96.8L949.6,104.8L958.5,101.7L966.4,117.8L976.3,128.0L974.3,132.9L965.5,137.2L954.6,139.7L950.6,142.1L960.1,141.2L958.9,146.5L966.4,150.8L957.5,156.3L954.6,152.2L950.6,155.0L948.7,161.2L940.7,164.1L939.0,168.4L936.8,173.2L937.8,177.6L926.9,185.2L926.1,188.7L928.9,196.5L927.9,200.5L925.3,198.8L922.0,190.9L918.0,189.8L913.1,189.1L910.7,192.1L905.2,190.7L901.2,190.5L894.7,194.8L894.9,199.0L893.7,206.3L896.7,212.7L900.2,214.8L906.2,214.6L909.1,208.5L915.1,208.5L913.5,214.8L912.1,220.0L920.0,220.4L922.6,222.0L921.8,228.1L923.0,232.1L929.9,233.5L933.8,235.1L932.2,237.1L927.9,235.7L926.9,237.5L922.0,235.1L917.6,232.1L916.0,229.1L913.9,226.1L909.1,225.1L904.2,222.8L900.2,220.0L895.3,220.4L889.4,217.9L882.4,215.4L878.5,211.6L879.1,208.5L876.5,205.3L871.0,199.2L867.2,194.3L864.1,189.8L860.1,186.1L864.7,194.3L868.6,202.0L869.8,205.5L865.2,201.4L860.7,194.8L857.7,188.7L855.6,184.0L852.8,180.5L848.6,179.3L844.9,171.2L841.1,164.6L840.9,157.7L841.9,148.5L840.5,142.4L843.9,140.6L835.0,135.1L829.1,123.0L823.2,116.0L816.2,108.7L808.3,102.9L798.4,100.9L787.0,106.0L782.6,114.2L770.8,119.6L761.9,122.7L770.8,116.0L776.7,107.9L767.2,107.5L760.9,100.9L761.3,92.6L766.8,88.2L760.9,83.7L754.8,78.6ZM237.2,14.5L233.2,-3.1L243.1,-23.9L256.9,-49.2L296.4,-72.8L336.0,-49.2L339.9,-13.0L337.9,14.5L332.0,36.8L332.0,52.6L320.2,63.9L305.3,76.6L299.4,79.1L292.5,94.7L288.5,102.9L280.6,98.9L273.7,86.0L269.8,74.2L274.7,61.1L268.8,52.6L265.8,40.1L262.8,26.2L253.0,14.5L237.2,14.5ZM343.9,74.7L331.0,76.2L328.1,80.0L331.0,86.0L337.9,88.7L345.9,85.1L348.6,79.1L343.9,74.7ZM265.8,132.5L269.8,139.1L270.8,147.4L258.3,145.0L260.9,139.1L265.8,132.5ZM212.4,204.8L217.4,205.3L224.3,208.5L228.9,211.6L222.1,211.9L220.4,207.8L215.4,207.4L207.7,207.6L212.4,204.8ZM231.6,212.1L237.4,212.3L240.5,215.0L235.2,215.6L228.5,215.2L231.6,212.1ZM220.7,214.8L224.7,215.0L223.7,216.0L220.7,215.4L220.7,214.8ZM242.7,214.8L245.8,215.0L245.3,215.8L242.7,215.8L242.7,214.8ZM222.5,234.9L227.3,230.1L232.8,228.5L234.0,230.9L234.0,227.3L241.1,231.1L253.0,230.7L256.9,235.1L262.8,240.1L268.8,241.1L273.7,243.1L276.7,248.0L276.7,252.0L280.6,254.0L288.5,256.9L296.4,257.9L305.7,262.3L306.3,267.9L299.4,277.9L297.4,288.2L292.5,298.5L285.6,299.8L279.6,304.1L278.7,311.9L272.7,318.8L265.8,325.4L259.9,324.7L262.8,329.6L253.0,335.3L251.0,341.0L249.0,345.0L242.1,354.6L245.5,360.4L239.1,368.0L240.1,374.0L243.1,381.0L247.0,382.0L237.2,384.8L228.3,376.0L226.3,366.4L227.3,354.6L229.2,346.3L229.6,342.3L230.2,330.8L233.8,321.2L234.4,314.2L236.2,303.1L236.6,289.2L224.7,279.9L220.4,271.9L215.0,263.9L214.8,260.9L216.4,256.9L217.0,252.0L219.6,249.0L222.5,244.1L221.7,238.1L222.5,234.9ZM363.8,176.1L395.3,172.4L397.2,173.2L397.2,178.1L398.2,182.8L406.1,184.0L413.1,188.7L416.0,184.0L421.0,183.3L433.8,186.3L439.3,187.0L439.7,189.8L442.5,196.5L448.4,207.4L451.6,215.8L453.6,221.0L460.9,227.1L460.9,229.1L476.7,228.5L475.9,232.1L470.4,242.1L465.4,248.0L457.5,255.0L453.6,260.9L453.6,265.9L455.3,272.9L455.9,282.0L444.3,292.4L445.7,300.9L440.3,305.2L439.7,311.9L432.8,318.8L426.9,323.5L415.0,325.4L412.1,324.2L411.5,317.7L408.1,311.0L403.8,296.6L398.8,286.7L402.6,275.9L401.2,268.9L399.8,263.9L394.3,255.0L394.9,248.0L393.3,244.1L388.3,243.5L382.2,239.3L372.5,242.1L360.7,242.9L354.7,240.1L349.4,236.5L348.4,233.1L344.3,229.5L340.9,222.6L341.9,210.6L344.3,203.1L349.8,194.8L355.7,192.1L357.1,184.5L362.1,180.7L363.8,176.1ZM472.9,275.9L475.3,283.0L472.3,292.4L468.4,303.7L462.5,303.1L461.1,296.6L463.4,285.1L467.4,283.0L472.9,275.9ZM-347.1,175.6L-340.0,173.9L-337.4,171.7L-336.6,166.9L-334.0,163.0L-329.7,159.6L-329.1,157.1L-324.1,156.9L-319.2,154.4L-316.2,155.0L-311.3,161.2L-305.2,165.6L-305.2,170.7L-303.2,168.4L-300.8,165.1L-302.4,164.3L-299.4,164.1L-304.4,160.6L-309.3,156.3L-311.7,151.1L-308.9,150.2L-306.7,153.6L-300.0,158.8L-297.7,163.0L-295.1,168.2L-293.3,173.2L-291.5,174.4L-288.6,171.2L-290.5,166.9L-290.9,164.3L-287.6,163.3L-283.6,163.5L-284.0,165.6L-282.2,170.7L-280.7,173.9L-275.7,175.2L-266.8,173.7L-265.0,175.6L-266.4,182.8L-267.8,186.3L-271.6,189.6L-267.6,194.3L-261.9,203.1L-256.9,211.6L-251.4,220.0L-250.0,226.7L-246.1,226.1L-237.2,222.0L-228.3,217.9L-224.1,214.8L-217.8,206.3L-220.4,204.0L-224.3,202.2L-224.7,198.1L-228.3,202.0L-233.2,203.1L-234.8,199.6L-237.2,197.0L-241.1,191.4L-240.1,189.8L-234.2,195.4L-228.3,197.7L-223.3,196.5L-214.5,199.9L-204.0,200.9L-201.2,204.2L-196.7,206.3L-196.7,210.0L-192.5,208.5L-192.1,213.7L-189.7,222.0L-185.4,232.1L-182.8,235.9L-178.3,232.1L-177.3,226.1L-174.9,220.0L-171.4,216.4L-164.3,210.6L-161.1,207.8L-156.1,207.4L-153.4,210.6L-149.4,217.9L-147.3,220.0L-143.3,218.9L-140.9,228.1L-141.7,236.1L-137.8,242.1L-134.8,247.1L-130.9,249.4L-131.6,244.1L-134.4,239.1L-139.7,233.1L-138.4,225.3L-134.4,227.1L-130.5,231.1L-128.9,234.9L-124.5,231.1L-120.0,227.1L-122.0,220.0L-127.1,213.7L-122.5,208.5L-118.6,208.5L-118.2,211.0L-111.7,206.3L-105.8,204.2L-99.8,199.9L-95.9,194.3L-95.1,187.7L-97.3,184.0L-99.8,178.1L-93.9,172.4L-100.8,171.9L-102.8,168.2L-95.9,165.6L-90.5,166.1L-86.0,171.4L-86.0,179.0L-80.7,177.6L-82.2,169.4L-83.6,165.6L-77.9,159.0L-75.1,157.7L-67.2,152.2L-58.7,142.1L-56.7,128.0L-58.3,126.4L-65.2,121.3L-53.4,105.6L-41.5,104.8L-25.7,96.0L-11.9,93.4L-15.8,102.9L-26.7,112.4L-26.5,134.4L-22.3,128.0L-14.8,117.8L-13.8,110.5L-7.9,102.9L-0.0,98.9L17.8,92.6L14.8,82.8L21.7,81.4L39.5,76.6L31.6,71.7L19.8,63.9L11.8,59.5L1.0,56.1L-5.9,57.8L-19.8,55.5L-27.7,50.8L-35.6,48.3L-41.5,42.0L-57.3,40.1L-63.3,46.5L-69.2,47.7L-77.1,45.9L-81.4,38.1L-90.9,34.0L-102.8,34.7L-112.7,32.6L-114.6,26.2L-113.7,12.9L-129.5,-0.3L-144.3,7.8L-150.2,16.1L-163.1,22.4L-176.9,33.3L-176.3,42.0L-172.9,46.5L-171.6,52.6L-181.8,46.5L-181.2,42.7L-184.8,47.7L-188.8,58.3L-184.8,63.9L-193.1,73.7L-193.1,67.6L-190.7,62.2L-191.7,53.7L-192.5,44.6L-196.7,36.8L-200.2,38.1L-204.6,49.6L-204.0,58.3L-205.6,61.1L-216.4,56.6L-220.4,63.3L-229.3,64.9L-232.2,67.6L-240.1,63.9L-246.1,68.1L-249.0,74.2L-252.4,75.7L-255.8,83.3L-263.9,83.7L-266.8,77.6L-270.8,73.2L-272.0,71.2L-265.8,74.7L-257.9,75.7L-254.4,71.7L-257.3,66.0L-264.9,61.1L-270.8,59.5L-282.6,49.6L-296.5,55.5L-307.3,69.1L-318.2,88.2L-326.1,102.9L-322.2,110.5L-315.2,106.8L-312.7,112.4L-310.3,119.6L-304.4,116.0L-299.4,105.6L-301.4,92.6L-291.5,78.1L-293.5,86.0L-292.5,101.7L-281.6,100.9L-276.7,103.3L-287.6,105.2L-288.6,114.2L-293.3,112.4L-294.5,118.9L-297.3,123.3L-299.4,122.7L-307.9,124.7L-314.3,123.3L-315.8,122.0L-315.1,116.0L-315.2,111.7L-319.6,114.2L-320.0,119.6L-318.6,125.4L-324.1,126.7L-327.7,131.3L-331.1,133.8L-332.8,134.8L-333.2,137.6L-335.8,139.1L-338.8,138.5L-339.0,141.5L-345.3,141.8L-340.9,145.6L-338.4,150.8L-339.0,156.3L-343.5,156.6L-351.8,155.8L-353.6,160.4L-354.8,168.9L-353.8,173.2L-350.8,173.2L-347.1,175.6ZM364.4,175.6L371.5,173.9L374.1,171.7L374.9,166.9L377.5,163.0L381.8,159.6L382.4,157.1L387.4,156.9L392.3,154.4L395.3,155.0L400.2,161.2L406.3,165.6L406.3,170.7L408.3,168.4L410.7,165.1L409.1,164.3L412.1,164.1L407.1,160.6L402.2,156.3L399.8,151.1L402.6,150.2L404.8,153.6L411.5,158.8L413.8,163.0L416.4,168.2L418.2,173.2L420.0,174.4L422.9,171.2L421.0,166.9L420.6,164.3L423.9,163.3L427.9,163.5L427.5,165.6L429.3,170.7L430.8,173.9L435.8,175.2L444.7,173.7L446.5,175.6L445.1,182.8L443.7,186.3L439.9,189.6L443.9,194.3L449.6,203.1L454.6,211.6L460.1,220.0L461.5,226.7L465.4,226.1L474.3,222.0L483.2,217.9L487.4,214.8L493.7,206.3L491.1,204.0L487.2,202.2L486.8,198.1L483.2,202.0L478.3,203.1L476.7,199.6L474.3,197.0L470.4,191.4L471.4,189.8L477.3,195.4L483.2,197.7L488.2,196.5L497.0,199.9L507.5,200.9L510.3,204.2L514.8,206.3L514.8,210.0L519.0,208.5L519.4,213.7L521.8,222.0L526.1,232.1L528.7,235.9L533.2,232.1L534.2,226.1L536.6,220.0L540.1,216.4L547.2,210.6L550.4,207.8L555.4,207.4L558.1,210.6L562.1,217.9L564.2,220.0L568.2,218.9L570.6,228.1L569.8,236.1L573.7,242.1L576.7,247.1L580.6,249.4L579.9,244.1L577.1,239.1L571.8,233.1L573.1,225.3L577.1,227.1L581.0,231.1L582.6,234.9L587.0,231.1L591.5,227.1L589.5,220.0L584.4,213.7L589.0,208.5L592.9,208.5L593.3,211.0L599.8,206.3L605.7,204.2L611.7,199.9L615.6,194.3L616.4,187.7L614.2,184.0L611.7,178.1L617.6,172.4L610.7,171.9L608.7,168.2L615.6,165.6L621.0,166.1L625.5,171.4L625.5,179.0L630.8,177.6L629.3,169.4L627.9,165.6L633.6,159.0L636.4,157.7L644.3,152.2L652.8,142.1L654.8,128.0L653.2,126.4L646.3,121.3L658.1,105.6L670.0,104.8L685.8,96.0L699.6,93.4L695.7,102.9L684.8,112.4L685.0,134.4L689.2,128.0L696.7,117.8L697.7,110.5L703.6,102.9L711.5,98.9L729.3,92.6L726.3,82.8L733.2,81.4L751.0,76.6L743.1,71.7L731.2,63.9L723.3,59.5L712.5,56.1L705.6,57.8L691.7,55.5L683.8,50.8L675.9,48.3L670.0,42.0L654.2,40.1L648.2,46.5L642.3,47.7L634.4,45.9L630.1,38.1L620.6,34.0L608.7,34.7L598.8,32.6L596.9,26.2L597.8,12.9L582.0,-0.3L567.2,7.8L561.3,16.1L548.4,22.4L534.6,33.3L535.2,42.0L538.6,46.5L539.9,52.6L529.7,46.5L530.3,42.7L526.7,47.7L522.7,58.3L526.7,63.9L518.4,73.7L518.4,67.6L520.8,62.2L519.8,53.7L519.0,44.6L514.8,36.8L511.3,38.1L506.9,49.6L507.5,58.3L505.9,61.1L495.1,56.6L491.1,63.3L482.2,64.9L479.3,67.6L471.4,63.9L465.4,68.1L462.5,74.2L459.1,75.7L455.7,83.3L447.6,83.7L444.7,77.6L440.7,73.2L439.5,71.2L445.7,74.7L453.6,75.7L457.1,71.7L454.2,66.0L446.6,61.1L440.7,59.5L428.9,49.6L415.0,55.5L404.2,69.1L393.3,88.2L385.4,102.9L389.3,110.5L396.3,106.8L398.8,112.4L401.2,119.6L407.1,116.0L412.1,105.6L410.1,92.6L420.0,78.1L418.0,86.0L419.0,101.7L429.9,100.9L434.8,103.3L423.9,105.2L422.9,114.2L418.2,112.4L417.0,118.9L414.2,123.3L412.1,122.7L403.6,124.7L397.2,123.3L395.7,122.0L396.4,116.0L396.3,111.7L391.9,114.2L391.5,119.6L392.9,125.4L387.4,126.7L383.8,131.3L380.4,133.8L378.7,134.8L378.3,137.6L375.7,139.1L372.7,138.5L372.5,141.5L366.2,141.8L370.6,145.6L373.1,150.8L372.5,156.3L368.0,156.6L359.7,155.8L357.9,160.4L356.7,168.9L357.7,173.2L360.7,173.2L364.4,175.6ZM369.6,108.3L371.9,111.7L372.5,121.3L375.9,126.4L378.9,128.4L378.3,132.9L378.1,134.1L376.1,135.1L371.5,135.7L364.6,137.2L367.2,133.8L365.4,132.5L366.4,128.4L369.6,126.7L368.4,123.0L365.6,121.3L364.2,118.5L364.0,114.2L365.4,108.7L369.6,108.3ZM361.1,120.3L363.4,124.4L363.0,130.6L356.1,132.9L355.7,128.0L355.7,123.7L361.1,120.3ZM653.2,161.7L655.2,164.3L654.2,170.7L654.0,176.6L648.6,179.0L643.9,181.7L638.4,179.8L634.4,180.5L638.4,176.9L645.3,174.4L649.8,171.2L652.2,166.9L653.2,161.7ZM655.9,150.8L662.1,155.0L663.1,157.7L658.1,160.4L652.2,161.4L653.0,157.1L655.9,150.8ZM634.2,180.5L631.4,181.7L632.8,187.0L635.2,186.3L636.0,182.4L634.2,180.5ZM641.3,179.8L640.7,182.4L638.4,183.3L636.8,181.7L641.3,179.8ZM657.1,123.7L658.7,134.4L657.1,149.4L655.8,147.9L656.1,134.4L657.1,123.7ZM615.6,200.3L614.2,207.4L612.9,205.3L615.6,200.3ZM593.9,211.6L591.9,215.4L590.1,212.7L593.9,211.6ZM614.4,214.8L617.0,215.2L620.6,224.1L620.6,226.9L613.9,224.5L612.3,218.9L614.4,214.8ZM623.5,232.5L625.5,238.1L622.5,240.1L616.6,238.1L619.6,235.1L623.5,232.5ZM622.5,227.1L623.5,231.1L618.6,233.1L616.6,230.1L622.5,227.1ZM606.7,238.1L611.3,242.1L610.5,250.0L605.7,255.0L604.8,259.9L595.9,258.9L593.3,257.9L592.9,255.0L590.9,249.0L595.3,248.0L601.2,242.9L606.7,238.1ZM563.8,240.9L568.4,241.7L573.5,246.3L580.1,251.0L584.0,256.9L584.6,263.7L581.6,262.9L577.1,257.9L572.2,252.0L567.6,247.1L563.8,240.9ZM585.0,263.9L593.9,265.7L597.8,265.9L601.6,267.5L601.8,269.5L593.9,267.9L586.0,266.7L585.0,263.9ZM602.8,268.3L610.7,268.9L618.6,268.5L622.5,268.9L627.1,268.3L622.5,270.9L619.6,272.5L611.7,269.7L603.2,269.5L602.8,268.3ZM622.5,249.4L613.7,250.4L612.3,253.6L610.5,258.9L611.7,263.1L613.7,262.9L614.6,257.9L617.6,260.9L616.6,256.0L619.2,254.0L614.6,251.0L622.5,249.4ZM634.4,253.6L647.3,255.0L654.2,257.1L664.1,262.9L667.6,264.9L672.9,272.5L666.0,270.5L660.1,267.9L657.3,269.9L650.2,268.3L643.3,260.9L638.0,259.9L636.8,256.9L634.4,253.6ZM657.1,273.3L659.3,279.9L662.9,284.0L667.0,291.3L673.5,297.7L678.1,303.1L679.1,310.8L676.9,320.0L673.5,324.7L672.0,332.1L666.0,332.8L664.6,335.3L661.1,334.1L655.2,334.3L652.4,332.1L648.6,327.6L649.2,325.9L647.3,325.4L647.8,321.2L643.9,324.7L639.3,318.8L634.4,317.7L626.5,318.8L619.6,323.3L608.7,325.4L603.0,324.5L604.0,317.7L601.2,310.8L599.8,305.2L600.6,296.6L601.2,296.2L609.7,293.0L617.0,288.2L618.6,285.1L623.5,281.0L628.3,280.4L631.4,282.0L633.4,276.9L638.4,275.9L645.3,273.9L644.1,277.9L643.3,282.0L653.8,287.1L655.2,282.0L655.4,276.9L657.1,273.3ZM661.5,340.5L668.6,341.0L665.6,347.9L662.5,346.3L661.5,340.5ZM5.3,324.5L11.8,332.1L16.8,332.3L14.2,337.1L10.3,342.6L8.5,338.4L9.1,334.6L7.9,329.6L5.3,324.5ZM716.8,324.5L723.3,332.1L728.3,332.3L725.7,337.1L721.8,342.6L720.0,338.4L720.6,334.6L719.4,329.6L716.8,324.5ZM5.3,339.7L8.5,343.1L6.1,348.5L-2.0,356.3L-6.9,354.9L-2.0,348.5L5.3,339.7ZM716.8,339.7L720.0,343.1L717.6,348.5L709.5,356.3L704.6,354.9L709.5,348.5L716.8,339.7ZM534.0,232.5L537.2,236.1L536.2,240.1L533.6,239.7L533.2,236.1L534.0,232.5ZM489.1,53.1L481.2,48.3L478.3,38.8L482.2,27.6L488.2,17.7L498.0,9.5L508.9,5.1L511.5,11.2L501.0,19.3L491.1,28.4L487.2,36.8L489.1,46.5L489.1,53.1ZM408.1,10.3L401.2,-1.2L397.2,-13.0L409.1,-23.9L428.9,-18.3L422.9,-3.1L417.0,3.4L408.1,10.3ZM646.3,23.9L643.9,16.1L654.2,12.9L672.0,20.9L664.1,26.2L646.3,23.9ZM20.7,49.6L23.7,46.5L26.7,48.3L23.7,50.8L20.7,49.6ZM732.2,49.6L735.2,46.5L738.2,48.3L735.2,50.8L732.2,49.6ZM653.2,35.4L654.2,30.5L660.1,32.6L659.1,35.4L653.2,35.4ZM67.4,211.9L67.6,211.2L69.6,212.7L67.8,213.9L67.4,211.9ZM778.9,211.9L779.1,211.2L781.1,212.7L779.3,213.9L778.9,211.9ZM65.8,209.5L67.4,210.4L66.0,210.6L65.8,209.5ZM777.3,209.5L778.9,210.4L777.5,210.6L777.3,209.5ZM62.8,208.0L64.0,208.9L62.8,209.1L62.8,208.0ZM774.3,208.0L775.5,208.9L774.3,209.1L774.3,208.0ZM60.1,206.8L60.7,207.6L59.7,207.6L60.1,206.8ZM771.6,206.8L772.2,207.6L771.2,207.6L771.6,206.8Z"/><path d="M141.3,12.9L132.4,9.5L134.4,3.4L144.3,1.6L147.2,7.8L141.3,12.9ZM186.8,25.4L185.4,20.1L189.7,18.5L191.7,22.4L186.8,25.4ZM195.6,59.5L198.6,52.6L194.7,44.6L188.7,43.3L184.8,52.6L186.8,58.3L195.6,59.5ZM216.4,38.1L215.4,32.6L222.3,31.9L224.3,36.8L216.4,38.1ZM193.7,-1.2L201.6,-8.0L193.7,-23.9L183.8,-18.3L185.8,-3.1L193.7,-1.2ZM201.6,33.3L209.5,31.2L221.3,34.0L221.7,38.8L229.2,43.3L235.2,49.6L240.1,55.5L242.1,60.0L246.0,64.9L251.0,70.7L253.4,74.2L250.0,79.1L250.0,82.3L245.1,79.1L246.6,85.1L247.4,86.9L244.1,89.1L246.0,92.6L245.1,95.1L236.2,92.2L233.2,89.6L226.3,85.1L221.3,83.7L229.2,79.1L232.2,70.7L228.3,64.9L224.3,58.3L211.5,54.3L203.6,53.7L198.6,45.9L201.6,33.3ZM142.9,52.6L140.9,47.7L143.3,41.4L149.2,37.4L158.1,33.3L165.0,35.4L168.0,40.1L173.9,46.5L176.9,52.0L174.9,58.3L168.0,61.7L161.1,61.1L153.2,63.3L146.2,58.3L142.9,52.6ZM132.4,49.0L127.3,45.2L127.5,38.1L129.4,29.8L136.4,26.2L143.1,28.4L146.2,35.4L140.7,40.1L139.3,46.5L132.4,49.0ZM198.0,12.0L209.5,11.2L220.4,9.5L221.7,1.6L229.2,-8.0L237.2,-23.9L187.7,-23.9L186.8,6.0L198.0,12.0ZM195.6,25.4L209.5,25.4L216.4,25.4L218.0,18.5L215.4,12.0L199.6,10.3L187.7,13.7L190.7,19.3L195.6,25.4ZM189.7,41.4L186.8,36.8L187.7,29.1L196.6,29.8L192.7,36.8L189.7,41.4ZM183.8,45.9L185.8,40.1L182.8,30.5L172.9,31.9L172.3,40.1L177.9,45.9L183.8,45.9ZM164.0,26.2L154.1,23.9L144.3,22.4L142.3,16.9L146.2,10.3L158.1,8.6L168.0,12.0L169.0,17.7L164.0,26.2ZM179.8,22.4L174.9,17.7L175.9,10.3L180.8,9.5L183.8,16.1L179.8,22.4ZM209.5,79.1L214.4,83.7L210.5,93.4L203.6,88.2L209.5,79.1ZM179.8,63.3L176.9,59.5L180.8,56.1L185.8,56.6L186.8,61.7L179.8,63.3Z"/></clipPath><filter id="spk" x="0" y="0" width="100%" height="100%"><feTurbulence type="fractalNoise" baseFrequency="0.16 0.11" numOctaves="3" seed="11"/><feColorMatrix type="matrix" values="0 0 0 0 0.2 0 0 0 0 0.2 0 0 0 0 0.2 16 0 0 0 -10.4"/></filter><radialGradient id="cg" cx="0.5" cy="0.5" r="0.5"><stop offset="0.55" stop-color="#fff"/><stop offset="1" stop-color="#fff" stop-opacity="0"/></radialGradient><mask id="cm"><ellipse cx="195" cy="40" rx="85" ry="55" fill="url(#cg)"/><ellipse cx="225" cy="120" rx="35" ry="28" fill="url(#cg)"/></mask></defs><g clip-path="url(#landclip)" mask="url(#cm)"><rect x="60" y="0" width="260" height="170" filter="url(#spk)"/></g><path d="M237.2,14.5L233.2,-3.1L243.1,-23.9L256.9,-49.2L296.4,-72.8L336.0,-49.2L339.9,-13.0L337.9,14.5L332.0,36.8L332.0,52.6L320.2,63.9L305.3,76.6L299.4,79.1L292.5,94.7L288.5,102.9L280.6,98.9L273.7,86.0L269.8,74.2L274.7,61.1L268.8,52.6L265.8,40.1L262.8,26.2L253.0,14.5L237.2,14.5Z" fill="#000" stroke="#000" stroke-width="0.8"/><path d="M432.8,162.5L440.7,162.7L446.6,161.2L457.5,163.0L457.9,160.4L450.6,153.6L447.6,151.4L442.1,153.9L439.7,150.8L436.8,147.7L435.8,149.4L432.2,155.0L430.8,160.4L432.8,162.5ZM471.4,147.1L477.3,146.5L480.2,152.2L479.3,159.0L480.2,163.5L482.2,172.2L478.3,174.2L472.3,171.9L473.3,165.6L471.4,160.4L469.4,154.1L471.4,147.1ZM193.5,147.7L195.6,145.6L198.8,143.6L201.6,141.2L204.5,141.5L207.7,143.9L208.3,147.9L204.5,148.2L201.2,147.1L197.0,147.7L193.5,147.7ZM206.5,149.4L203.6,149.9L202.4,153.6L201.8,157.7L202.6,161.2L204.7,159.8L204.7,155.5L206.7,151.6L207.9,149.9L206.5,149.4ZM209.3,148.8L214.4,149.7L216.4,150.8L217.2,153.6L213.0,157.1L210.7,154.7L210.5,151.1L209.3,148.8ZM219.6,158.0L215.0,159.6L210.7,161.2L212.8,162.0L217.2,160.1L219.6,158.0ZM217.8,156.9L224.9,156.1L224.5,154.7L219.0,156.1L217.8,156.9ZM136.4,71.7L143.3,75.2L138.3,80.5L131.8,81.9L127.5,76.6L136.4,71.7ZM146.2,96.8L150.2,92.6L160.1,91.3L157.1,93.9L151.2,97.6L143.3,99.3L146.2,96.8ZM184.2,136.6L182.2,131.3L180.8,125.4L183.4,126.7L184.8,132.9L184.2,136.6ZM159.1,105.6L165.0,106.4L155.7,107.9L159.1,105.6ZM581.0,132.9L589.9,126.4L591.9,118.5L590.9,120.3L586.0,128.0L580.5,132.2L581.0,132.9ZM440.7,251.4L443.1,253.0L440.7,256.9L438.2,256.5L438.3,253.0L440.7,251.4ZM453.0,145.9L451.0,149.1L445.7,151.4L444.7,148.5L453.0,145.9Z" fill="#333" stroke="#333" stroke-width="1.4" stroke-linejoin="round"/><path d="M96.8,57.8L96.8,101.7L100.8,102.9L103.7,104.4L107.7,107.1L117.6,116.0L118.6,119.6M808.3,57.8L808.3,101.7L812.3,102.9L815.2,104.4L819.2,107.1L829.1,116.0L830.1,119.6M131.8,140.6L187.3,140.6L187.7,139.4L191.7,141.8L198.4,143.6L204.5,145.6L208.9,147.9L212.4,150.8L212.6,157.7L211.3,160.4L212.4,161.2L219.0,158.8L219.4,156.9L224.3,156.1L225.3,154.1L227.9,152.2L234.2,152.2L235.2,151.4L237.0,147.9L238.7,145.3L241.1,145.6L241.5,149.7L243.1,152.2M144.1,184.0L148.8,183.5L156.1,186.8L161.7,186.8L165.0,185.7L169.0,190.9L171.9,192.1L174.9,190.3L178.8,195.4L183.4,199.0M199.4,216.2L193.3,223.0M199.4,216.2L195.8,216.0L194.3,220.0L193.3,223.0M201.2,220.4L199.0,223.2L197.4,224.5M199.0,223.2L202.0,225.3M211.1,222.0L205.5,224.3L202.6,226.1M206.1,230.1L210.1,229.7M212.3,232.9L211.5,235.7M222.5,234.7L221.5,237.7M232.8,228.5L231.4,231.1L232.4,235.5L237.0,238.1L242.1,239.9L241.5,244.1L243.3,249.6M256.9,235.1L255.9,237.7L255.5,241.7L251.4,244.1L248.0,244.7L249.0,248.0L243.3,249.6M262.5,240.3L260.9,244.1L263.8,248.0M268.8,240.7L267.8,247.5M273.3,243.7L267.8,247.7L264.8,248.4L257.9,248.0L256.9,245.1L255.3,243.1L255.5,241.7M243.3,249.6L238.1,253.0L237.4,260.3L229.6,266.9L232.8,271.9L236.2,273.9L239.7,273.9L246.4,271.9L254.0,278.9L256.5,284.7L260.7,292.4L265.2,296.6L268.2,300.9L269.2,305.2L269.2,308.1L261.7,314.7L265.8,317.7L270.0,322.8M219.8,249.2L222.3,250.4L226.9,252.2L234.2,256.5L237.4,260.3M217.0,258.7L219.4,261.9L223.3,257.9L226.3,254.0L226.9,252.2M238.1,273.9L239.5,279.9L238.1,287.1L236.4,289.0M238.1,287.1L240.7,294.5L242.7,298.3L239.9,307.5L237.2,321.2L235.2,330.8L233.4,341.0L233.6,354.6L230.8,366.4L233.4,372.7L240.1,374.0M242.7,298.3L251.4,296.6L258.7,290.9L260.7,292.4M251.8,296.6L261.7,303.7L264.8,308.6L269.2,308.1M261.7,314.7L260.1,323.5M371.2,177.8L373.1,185.2L365.6,190.9L358.3,195.0L349.4,195.0M358.3,195.9L366.0,200.9L364.6,221.0L352.8,221.0L351.4,222.4L343.1,218.9M392.5,173.2L390.9,182.8L394.3,189.3L395.3,197.7L399.0,203.1L399.2,204.2L405.1,205.3L422.7,212.7M366.0,200.9L382.0,213.5L383.8,213.7L383.4,220.0L383.4,222.0L375.9,222.2L374.5,221.4M383.8,213.7L399.2,204.2M424.9,186.1L424.9,207.4L448.6,207.4M424.9,207.4L422.9,212.7M422.9,212.7L421.2,220.4L420.8,230.3L421.7,234.1M451.6,215.8L447.4,222.0L446.6,227.1L443.1,232.1L441.1,235.7M420.6,228.1L428.9,232.1L442.5,233.1M431.6,242.9L436.8,245.1L444.7,242.9L446.3,242.1M460.9,229.1L470.2,236.1L466.2,242.3L458.5,244.1M458.3,244.1L457.7,255.4M446.5,242.9L454.4,244.3L458.3,244.1M382.6,224.9L402.4,226.1M392.5,243.1L398.8,238.1L404.2,226.1M405.1,204.4L402.8,225.1M404.2,226.1L406.1,232.1L406.3,236.9M406.1,237.1L413.1,236.1L421.7,234.1M394.9,247.7L397.8,247.7L407.1,247.8L412.3,244.7L412.1,243.9L429.9,242.1L431.6,242.9M399.6,261.9L406.9,261.1L410.5,252.0L412.3,244.7M399.8,263.7L408.3,265.7L410.1,267.9L419.8,273.9L419.0,277.9L422.9,277.9M453.0,261.1L442.7,254.0L434.8,254.0L434.8,244.1M442.7,254.0L442.7,244.1M434.0,254.0L433.4,260.9L435.8,268.9L440.7,270.7L443.9,274.9L455.3,272.9M398.8,286.9L421.7,286.9L425.3,288.2M417.0,288.2L417.0,296.6L415.0,296.6L415.0,310.6L408.1,311.0M415.0,303.1L424.9,304.8L433.6,297.2L437.4,297.4L435.6,284.0L440.7,275.9L440.7,270.7M422.9,277.9L435.8,268.9M424.9,287.1L435.6,284.0M352.8,227.3L359.7,232.1L370.0,232.1L375.5,230.1L382.6,230.1L382.6,224.9M374.7,222.0L379.8,226.1M369.8,241.9L370.0,230.1M377.9,239.9L375.5,230.1M380.8,239.3L382.6,227.5M360.7,243.3L359.3,235.1L359.7,232.1M349.2,233.1L354.7,235.5L353.2,237.1M342.5,226.9L352.8,227.3M440.5,307.2L438.7,303.1L437.4,297.4M431.8,311.0L433.6,311.9L433.0,313.7L431.0,315.6L428.9,314.4L429.3,312.6L431.8,311.0M357.9,160.4L362.7,160.4L361.9,163.0L360.7,166.9L361.3,170.7L360.9,172.7M371.9,156.6L375.5,158.2L381.8,159.0M380.4,134.1L385.0,137.2L387.0,139.1L391.7,140.6L390.5,144.8L387.6,148.2L389.3,149.7L390.3,154.7L390.3,155.5M382.2,133.2L386.4,133.2L387.4,135.1M389.7,127.0L389.3,130.6L387.4,131.9L387.4,135.1L388.0,139.1M392.5,121.6L395.1,122.0M403.6,124.7L404.4,129.7L405.1,134.4L399.6,136.6L402.8,141.2L401.2,145.0L395.3,145.0L390.5,144.8M390.5,144.2L394.5,144.8L396.1,147.9L392.1,149.4L387.6,148.8M396.1,147.9L402.6,147.7L402.6,150.5M402.8,141.2L406.1,141.8L409.1,143.3L407.5,146.5L407.3,147.1M405.1,134.4L407.7,136.6L412.1,137.6L414.0,139.4L420.0,140.6L422.9,136.0L421.9,131.3L421.9,125.0L420.6,123.3L414.2,123.3M409.1,141.8L412.7,139.1M409.1,143.3L419.0,141.8M420.8,143.9L415.6,149.9L420.0,153.3L420.4,155.8L424.9,155.5L428.9,155.0L431.8,155.5M402.4,150.8L408.1,148.5L412.9,149.9L413.1,151.6L414.0,155.0L413.4,159.0L416.0,159.8L416.4,163.0L417.0,165.6L415.0,166.6M417.0,163.5L420.0,162.2L427.1,161.7L427.7,163.5M430.8,160.4L427.5,161.2M420.0,157.7L416.0,159.8M420.8,143.9L427.9,143.0L431.2,147.7L434.0,151.6M422.1,132.9L428.9,131.6L438.2,130.9L442.3,130.3L445.7,136.0L450.6,138.2L454.2,143.6L451.0,146.2M438.2,130.9L439.7,126.4L436.6,118.5L430.8,118.9L425.9,124.7L421.9,125.0M430.4,112.4L430.8,118.5M430.8,105.2L429.9,112.4M417.0,117.5L428.1,116.4M423.5,110.9L429.5,112.4M430.2,100.9L437.8,92.6L434.8,81.4L432.2,66.5L432.8,56.6L436.8,58.3M423.1,77.6L416.0,63.9L418.0,58.3L428.9,55.5L432.8,56.6M398.0,106.8L400.0,98.9L399.2,88.2L404.2,76.6L412.1,64.4L416.0,61.1M457.5,161.4L461.3,163.0L464.0,166.6L464.0,172.9L459.1,172.4L451.6,173.7L448.0,175.2M454.6,156.6L463.8,158.8L467.6,160.9L471.6,160.6M464.4,162.5L467.4,168.4M464.0,167.2L470.4,168.7L472.1,169.7M472.5,147.7L467.4,143.6L469.4,136.0L475.9,133.8L484.2,135.1L490.1,136.0L497.0,134.4L496.1,128.0L504.4,123.7L513.8,119.9L520.8,123.0L528.7,126.0L533.6,134.4L540.5,135.1L548.0,139.4M548.0,139.4L557.3,136.0L568.8,136.9L570.2,131.3L579.1,136.6L587.0,136.6L594.9,139.1L601.8,137.6L606.1,138.2M606.1,138.2L613.1,129.7L619.6,126.4L625.5,134.4L628.5,140.6L641.7,142.7L641.3,144.5L638.4,151.4L634.8,157.7L633.6,159.3M548.0,139.4L539.9,145.9L538.6,152.2L534.0,158.2L522.7,157.1L515.8,159.0L509.9,163.0L505.9,161.4L505.0,156.1L498.0,150.5L486.2,152.2L486.2,162.2L480.2,162.2M482.0,172.4L488.5,170.7L495.1,172.4L496.5,176.9L500.4,176.6L506.9,172.4L509.9,172.9L516.8,171.9L521.0,166.9L518.8,163.0M464.0,172.4L466.2,176.4L466.4,181.7L470.0,185.2L471.4,189.8M459.3,172.9L456.5,179.3L452.2,181.9L453.2,184.7L458.5,187.5L463.8,191.8L467.4,191.8L471.4,189.8M444.7,191.4L449.6,190.0L453.2,184.7M460.1,219.1L462.5,216.9L468.4,217.9L478.3,213.7L485.4,206.1M445.7,182.8L446.6,184.5L452.2,181.9M496.5,176.9L497.6,186.6L495.9,190.3L500.0,195.4L497.2,200.5M495.9,190.3L502.0,191.4L507.9,190.3L512.5,186.3L514.8,180.9L516.8,176.6L522.7,173.2M510.3,203.8L515.8,202.2L514.8,194.3L521.4,188.7L523.1,184.0L527.7,178.1M529.3,176.9L531.6,179.8L531.6,185.2L535.8,188.7M534.8,189.6L541.5,193.0L549.8,197.9M534.8,189.6L545.5,194.3L549.6,194.8M557.3,194.5L565.2,191.6L567.6,196.5L561.7,204.2L559.3,207.4M551.4,207.4L551.4,200.3L553.0,198.5L558.3,200.5L558.3,205.7M569.2,193.9L568.4,202.0L575.5,207.8L583.8,206.6L589.0,208.5M573.1,211.0L570.4,220.0L570.2,232.1M573.3,210.8L578.3,216.2L584.0,221.0L580.1,223.2L578.9,228.9M577.5,206.6L582.0,210.6L585.0,216.9L588.2,222.4L585.6,229.1L582.0,231.3M573.1,239.1L577.1,239.7M548.8,140.0L555.0,151.6L565.8,158.8L582.6,161.4L592.9,159.0L596.5,153.6L603.8,149.9L612.3,144.5L606.1,138.2M534.0,158.2L525.1,163.5L521.4,167.4L522.7,172.9L529.3,176.9M621.0,166.1L625.5,160.9L633.6,159.3M624.7,171.2L629.1,169.4M608.3,243.7L601.8,249.0L596.9,247.7L592.1,249.0M654.2,257.1L654.2,270.1" fill="none" stroke="#7a7a7a" stroke-width="0.9" stroke-linejoin="round"/></svg>
<svg class="abs" style="left:0;top:0" width="821" height="400" viewBox="78 86 821 400">
 <g fill="#01B8AA" fill-opacity="0.82" stroke="#3fd0c2" stroke-opacity="0.35" stroke-width="0.8">
  <circle cx="262.8" cy="180" r="11.6"/>
  <circle cx="258" cy="254" r="21"/>
  <circle cx="448.2" cy="211.6" r="10.6"/>
  <circle cx="474.3" cy="221.4" r="7"/>
  <circle cx="458.3" cy="233.7" r="7.3"/>
  <circle cx="718.8" cy="391.8" r="17.7"/>
 </g>
 <circle cx="863.8" cy="102.2" r="11.5" fill="#262626"/>
 <circle cx="863.8" cy="102.2" r="10" fill="#4a4a4a"/>
 <rect x="856.4" y="98.2" width="14.4" height="9" fill="none" stroke="#ddd" stroke-width="1.2"/>
 <path d="M864.6,101.2 L870.2,106.8 L867.4,107 L869,109.6 L867.8,110.2 L866.2,107.6 L864.6,109.4Z" fill="#ddd" stroke="#4a4a4a" stroke-width="0.6"/>
 <g transform="translate(82,472)"><rect width="3.4" height="3.4" fill="#f25022"/><rect x="3.8" width="3.4" height="3.4" fill="#7fba00"/><rect y="3.8" width="3.4" height="3.4" fill="#00a4ef"/><rect x="3.8" y="3.8" width="3.4" height="3.4" fill="#ffb900"/></g>
</svg>
<div class="glbl" style="color:rgba(255,255,255,.42);font-size:7.1px;left:149px;top:121px">NORTH AMERICA</div>
<div class="glbl" style="left:266px;top:184px">Atlantic Ocean</div>
<div class="glbl" style="color:rgba(255,255,255,.42);font-size:7.1px;left:247px;top:279px">SOUTH AMERICA</div>
<div class="glbl" style="color:rgba(255,255,255,.42);font-size:7.1px;left:410px;top:129px">EUROPE</div>
<div class="glbl" style="color:rgba(255,255,255,.42);font-size:7.1px;left:414px;top:235px">AFRICA</div>
<div class="glbl" style="color:rgba(255,255,255,.42);font-size:7.1px;left:575px;top:115px">ASIA</div>
<div class="glbl" style="left:505px;top:292px">Indian Ocean</div>
<div class="glbl" style="left:733px;top:179px">Pacific Ocean</div>
<div class="glbl" style="color:rgba(255,255,255,.42);font-size:7.1px;left:633px;top:292px">AUSTRALIA</div>
<div class="lbl" style="left:169px;top:64px">Canada</div>
<div class="lbl" style="left:152px;top:129px">United States</div>
<div class="lbl" style="left:336px;top:98px">United Kingdom</div>
<div class="lbl" style="left:366px;top:124px;background:none;box-shadow:none">France</div>
<div class="lbl" style="left:377px;top:149px;background:none;box-shadow:none">Germany</div>
<div class="lbl" style="left:623px;top:270px">Australia</div>
<div class="abs" style="left:12px;top:386px;font-size:5.7px;color:#ddd;white-space:nowrap">Microsoft Bing</div>
<div class="abs" style="left:699px;top:387px;font-size:6.55px;color:#ddd;white-space:nowrap">© 2025 Microsoft Corporation</div>
<div class="abs" style="left:787px;top:387px;font-size:6.6px;color:#9aa5e6;white-space:nowrap;text-decoration:underline">Terms</div>
</div>

<div class="abs" id="tabs"></div>
<div class="abs" id="tabband"></div>
<div class="tab" style="left:-10.7px">Exec Dashboard</div>
<div class="tab" style="left:119px;font-weight:bold">Map</div>
<div class="abs" style="left:153px;top:512px;font-size:10.5px;font-weight:bold;color:#252423">x</div>
<div class="tab" style="left:184px">Product Detail</div>
<div class="tab" style="left:300px">Customer Detail</div>
<div class="tab" style="left:435px">Category Tooltip</div>
<svg class="abs" style="left:417px;top:523px" width="14" height="13" viewBox="0 0 14 13"><path d="M1.5,6.5 Q7,1 12.5,6.5 Q7,12 1.5,6.5Z" fill="none" stroke="#555" stroke-width="1"/><circle cx="7" cy="6.5" r="2" fill="none" stroke="#555" stroke-width="1"/><path d="M2,1.5 L12,11.5" stroke="#555" stroke-width="1"/></svg>
<div class="tab" style="left:555px">Q&amp;A</div>
<div class="tab" style="left:622px">Decomposition Tree</div>
<div class="tab" style="left:768px">Key Influencers</div>
<div class="sep" style="left:99px"></div>
<div class="sep" style="left:163px"></div>
<div class="sep" style="left:279px"></div>
<div class="sep" style="left:406px"></div>
<div class="sep" style="left:534px"></div>
<div class="sep" style="left:601px"></div>
<div class="sep" style="left:748px"></div>
<div class="abs" style="left:99px;top:540px;width:65px;height:4px;background:#117865"></div>
<div class="abs" style="left:870px;top:509px;width:39px;height:35px;background:#117865"></div>
<svg class="abs" style="left:870px;top:509px" width="39" height="35"><path d="M19.5,11V22M14,16.5H25" stroke="#fff" stroke-width="3.2"/></svg>
<div class="abs" style="left:909px;top:509px;width:42px;height:35px;background:#f0efed"></div>
<svg class="abs" style="left:410px;top:486px" width="130" height="65" viewBox="410 486 130 65">
 <g fill="none" stroke="rgba(195,195,195,0.55)" stroke-width="6" stroke-linecap="round" stroke-linejoin="round">
  <path d="M424,504 Q420,518 432,518 L526,518 Q530,512 528,504"/>
  <path d="M466,494 V518"/>
  <path d="M476,505 Q486,502 488,510 Q488,518 480,518"/>
  <path d="M500,518 Q496,504 506,503 Q514,504 512,512"/>
  <path d="M446,510 Q452,504 458,512"/>
 </g>
 <g fill="rgba(195,195,195,0.55)"><circle cx="527" cy="495" r="3.5"/><circle cx="507" cy="494" r="3.5"/><circle cx="484" cy="494" r="3.5"/></g>
 <text x="424" y="546" font-family="Liberation Sans" font-weight="bold" font-size="17" fill="rgba(195,195,195,0.5)" textLength="104" lengthAdjust="spacingAndGlyphs">nafezly.com</text>
</svg>
</body></html>
